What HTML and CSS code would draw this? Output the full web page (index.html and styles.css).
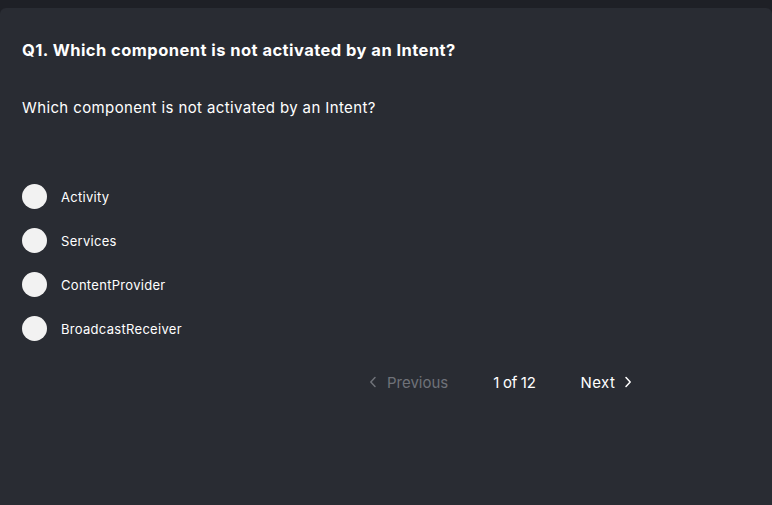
FILE: index.html
```html
<!DOCTYPE html>
<html>
<head>
<meta charset="utf-8">
<link rel="stylesheet" href="styles.css">
</head>
<body>
<div class="topbar"></div>
<main class="card">
  <h1 class="title">Q1. Which component is not activated by an Intent?</h1>
  <p class="question">Which component is not activated by an Intent?</p>
  <ul class="options">
    <li class="option"><span class="radio"></span><span class="label">Activity</span></li>
    <li class="option"><span class="radio"></span><span class="label">Services</span></li>
    <li class="option"><span class="radio"></span><span class="label">ContentProvider</span></li>
    <li class="option"><span class="radio"></span><span class="label">BroadcastReceiver</span></li>
  </ul>
  <nav class="pager">
    <button class="nav prev"><svg width="8" height="12" viewBox="0 0 8 12"><path d="M6 1.5 1.8 6 6 10.5" fill="none" stroke="currentColor" stroke-width="1.5" stroke-linecap="round" stroke-linejoin="round"/></svg><span>Previous</span></button>
    <span class="count">1 of 12</span>
    <button class="nav next"><span>Next</span><svg width="8" height="12" viewBox="0 0 8 12"><path d="M2 1.5 6.2 6 2 10.5" fill="none" stroke="currentColor" stroke-width="1.5" stroke-linecap="round" stroke-linejoin="round"/></svg></button>
  </nav>
</main>
</body>
</html>
```
FILE: styles.css
```css
html, body {
  margin: 0;
  padding: 0;
  height: 100%;
}
body {
  background: #1e2026;
  font-family: "Inter", "Noto Sans", sans-serif;
  color: #ffffff;
  display: flex;
  flex-direction: column;
}
.topbar {
  height: 8px;
  flex: none;
}
.card {
  flex: 1;
  background: #292c33;
  border-radius: 6px 6px 0 0;
  padding: 0 22px;
}
.title {
  margin: 32px 0 0;
  font-size: 16.5px;
  font-weight: 700;
  line-height: 20px;
  letter-spacing: 0.45px;
}
.question {
  margin: 38px 0 0;
  font-size: 15px;
  font-weight: 400;
  line-height: 20px;
  letter-spacing: 0.38px;
}
.options {
  list-style: none;
  margin: 66px 0 0;
  padding: 0;
  display: flex;
  flex-direction: column;
  gap: 19px;
}
.option {
  display: flex;
  align-items: center;
  height: 25px;
}
.radio {
  width: 25px;
  height: 25px;
  border-radius: 50%;
  background: #f2f2f2;
  flex: none;
}
.label {
  margin-left: 14px;
  font-size: 13px;
  letter-spacing: 0.3px;
}
.pager {
  display: flex;
  align-items: center;
  margin: 29px 0 0 347px;
  height: 24px;
}
.nav {
  background: none;
  border: 0;
  padding: 0;
  font: inherit;
  font-size: 15px;
  display: flex;
  align-items: center;
  color: #fff;
}
.prev {
  color: #6f7279;
  gap: 10px;
  letter-spacing: 0;
}
.next {
  gap: 9px;
  letter-spacing: 0.4px;
}
.count {
  font-size: 15px;
  margin: 0 45px 0 45px;
  letter-spacing: -0.3px;
}
```
